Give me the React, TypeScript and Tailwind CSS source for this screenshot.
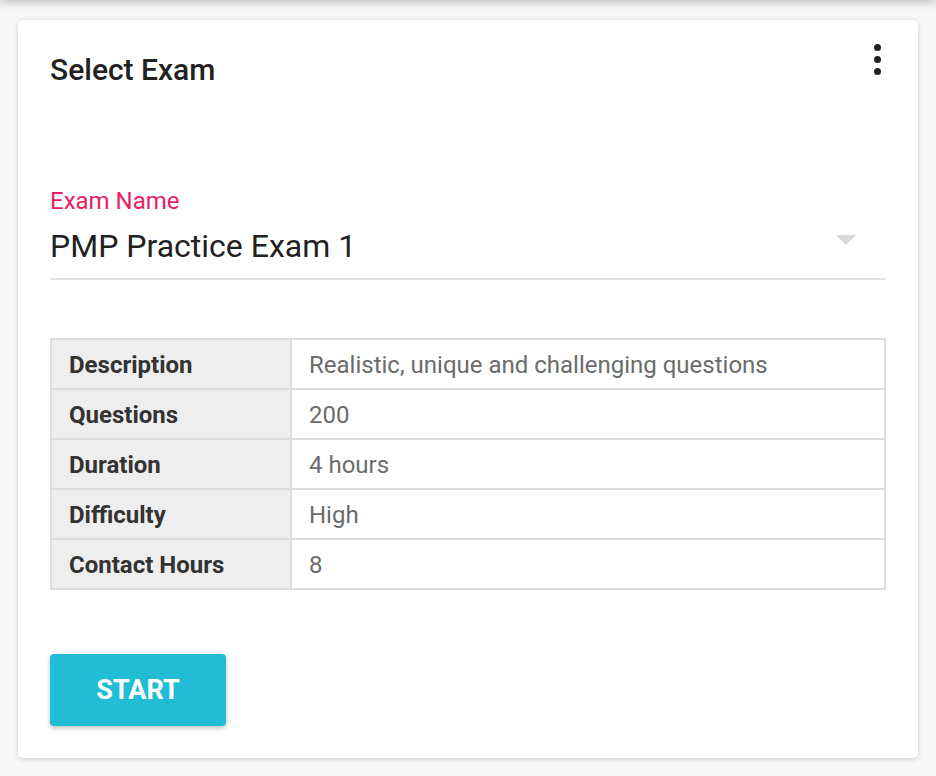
const ROWS: [string, string][] = [
  ["Description", "Realistic, unique and challenging questions"],
  ["Questions", "200"],
  ["Duration", "4 hours"],
  ["Difficulty", "High"],
  ["Contact Hours", "8"],
];

export default function App() {
  return (
    <div className="min-h-[776px] bg-[#f7f7f7] pt-[20px] font-['Roboto',sans-serif]">
      <div className="-mt-[36px] mb-[20px] h-4 bg-white shadow-[0_2px_8px_rgba(0,0,0,0.25)]" />
      <div className="ml-[18px] w-[900px] rounded-[5px] bg-white px-[32px] pb-[32px] pt-[24px] shadow-[0_1px_5px_rgba(0,0,0,0.18)]">
        <div className="flex items-start justify-between">
          <h1 className="mt-[8px] text-[30px] font-medium leading-[36px] text-[#212121]">
            Select Exam
          </h1>
          <div className="mr-[5px] flex flex-col gap-[5px]">
            <span className="h-[7px] w-[7px] rounded-full bg-[#212121]" />
            <span className="h-[7px] w-[7px] rounded-full bg-[#212121]" />
            <span className="h-[7px] w-[7px] rounded-full bg-[#212121]" />
          </div>
        </div>

        <label className="mt-[99px] block text-[24px] leading-[29px] text-[#e91e63]">
          Exam Name
        </label>
        <div className="mt-[10px] flex items-center justify-between border-b-2 border-[#e0e0e0] pb-[12px]">
          <span className="text-[32px] leading-[40px] text-[#212121]">
            PMP Practice Exam 1
          </span>
          <svg width="20" height="10" viewBox="0 0 20 10" className="mr-[30px] mt-[-12px]">
            <path d="M0 0h20L10 10z" fill="#d9d9d9" />
          </svg>
        </div>

        <div className="mt-[58px] border-2 border-[#dddddd]">
          {ROWS.map(([label, value], i) => (
            <div
              key={label}
              className={`flex h-[48px] text-[24px] ${i > 0 ? "box-content border-t-2 border-[#dddddd]" : ""}`}
            >
              <div className="flex w-[240px] items-center border-r-2 border-[#dddddd] bg-[#eeeeee] pl-[17px] pt-[2px] font-bold text-[#333333]">
                {label}
              </div>
              <div className="flex flex-1 items-center pl-[17px] pt-[2px] text-[#6b6b6b]">
                {value}
              </div>
            </div>
          ))}
        </div>

        <button
          type="button"
          className="mt-[64px] h-[72px] w-[176px] rounded-[4px] bg-[#22bdd4] text-[27px] font-bold text-white shadow-[0_2px_5px_rgba(0,0,0,0.25)]"
        >
          START
        </button>
      </div>
    </div>
  );
}
